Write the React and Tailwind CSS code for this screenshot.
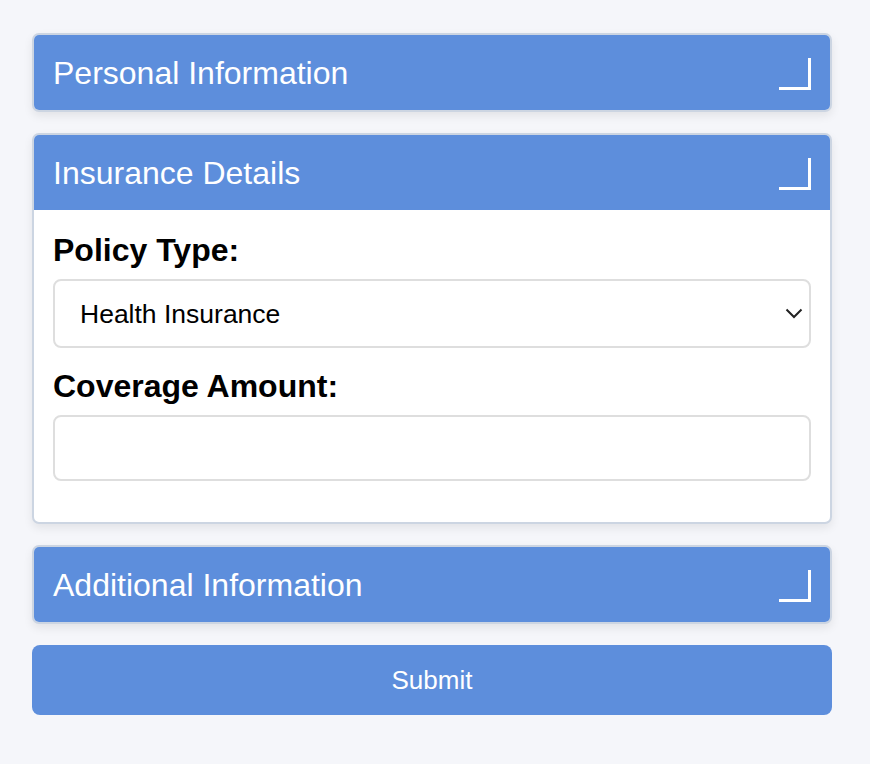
import React from "react";

function Corner() {
  return <div className="w-[32px] h-[32px] border-r-[3px] border-b-[3px] border-white mt-[2px]" />;
}

function Header({ title }) {
  return (
    <div className="flex items-center justify-between bg-[#5d8edc] pl-[19px] pr-[19px] h-[75px]">
      <span className="text-[32px] text-white leading-none">{title}</span>
      <Corner />
    </div>
  );
}

function Card({ title, children }) {
  return (
    <div className="rounded-[7px] border-2 border-[#ccd5e2] bg-white overflow-hidden shadow-[0_4px_10px_rgba(0,0,0,0.08)]">
      <Header title={title} />
      {children}
    </div>
  );
}

export default function App() {
  return (
    <div
      className="min-h-[764px] bg-[#f5f6fa] pt-[33px] px-[32px]"
      style={{ fontFamily: '"Liberation Sans", Arial, Helvetica, sans-serif' }}
    >
      <div className="flex flex-col w-[800px]">
        <Card title="Personal Information" />
        <div className="mt-[21px]">
          <Card title="Insurance Details">
            <div className="px-[19px] pt-[22px] pb-[41px]">
              <label className="block text-[32px] font-bold text-black leading-[36px]">Policy Type:</label>
              <div className="relative mt-[11px]">
                <select className="appearance-none w-full h-[69px] rounded-[8px] border-2 border-[#dedede] bg-white pl-[25px] pt-[2px] text-[26.5px] text-black outline-none">
                  <option>Health Insurance</option>
                </select>
                <svg className="absolute right-[8px] top-[29px] pointer-events-none" width="18" height="11" viewBox="0 0 18 11">
                  <path d="M1.5 1.5 L9 9 L16.5 1.5" fill="none" stroke="#222" strokeWidth="2" />
                </svg>
              </div>
              <label className="block mt-[20px] text-[32px] font-bold text-black leading-[36px]">Coverage Amount:</label>
              <input className="mt-[11px] block w-full h-[66px] rounded-[8px] border-2 border-[#dedede] bg-white outline-none" />
            </div>
          </Card>
        </div>
        <div className="mt-[21px]">
          <Card title="Additional Information" />
        </div>
        <button className="mt-[21px] h-[70px] w-full rounded-[8px] bg-[#5d8edc] text-white text-[26px]">Submit</button>
      </div>
    </div>
  );
}
